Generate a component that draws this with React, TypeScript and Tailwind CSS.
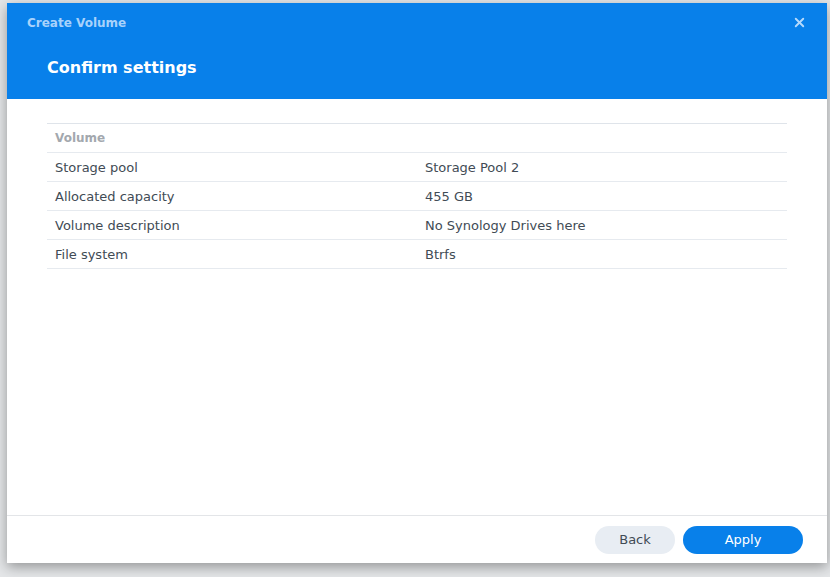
import { X } from "lucide-react";

const ROWS = [
  { label: "Storage pool", value: "Storage Pool 2" },
  { label: "Allocated capacity", value: "455 GB" },
  { label: "Volume description", value: "No Synology Drives here" },
  { label: "File system", value: "Btrfs" },
];

export default function App() {
  return (
    <div className="h-[577px] w-[830px] overflow-hidden bg-[#e4e6e8] pl-[7px] pt-[3px] font-['DejaVu_Sans',sans-serif]">
      <div className="flex h-[560px] w-[820px] flex-col bg-white shadow-[0_4px_12px_rgba(0,0,0,0.35)]">
        {/* Header */}
        <div className="h-[96px] bg-[#0880ea] pl-[20px] pr-[20px]">
          <div className="flex h-[39px] items-center justify-between">
            <span className="text-[12px] font-bold text-[#a8d2fb]">Create Volume</span>
            <X size={15} strokeWidth={3} className="text-[#b6dafc]" />
          </div>
          <h1 className="pl-[20px] pt-[14px] text-[16px] font-bold text-white">Confirm settings</h1>
        </div>

        {/* Body */}
        <div className="flex-1 px-[40px] pt-[24px]">
          <div className="border-t border-[#dfe4ea] w-[740px]">
            <div className="flex h-[29px] items-center border-b border-[#e6eaef] px-[8px] text-[12px] font-bold text-[#a3a8ae]">
              Volume
            </div>
            {ROWS.map((r) => (
              <div
                key={r.label}
                className="flex h-[29px] items-center border-b border-[#e6eaef] px-[8px] pt-[1px] text-[13px] text-[#414b55]"
              >
                <span className="w-[370px]">{r.label}</span>
                <span>{r.value}</span>
              </div>
            ))}
          </div>
        </div>

        {/* Footer */}
        <div className="flex h-[48px] items-center justify-end gap-[8px] border-t border-[#e3e5e8] pr-[24px]">
          <button className="h-[28px] w-[80px] rounded-full bg-[#e8edf3] text-[13px] text-[#414b55]">Back</button>
          <button className="h-[28px] w-[120px] rounded-full bg-[#0880ea] text-[13px] text-white">Apply</button>
        </div>
      </div>
    </div>
  );
}
